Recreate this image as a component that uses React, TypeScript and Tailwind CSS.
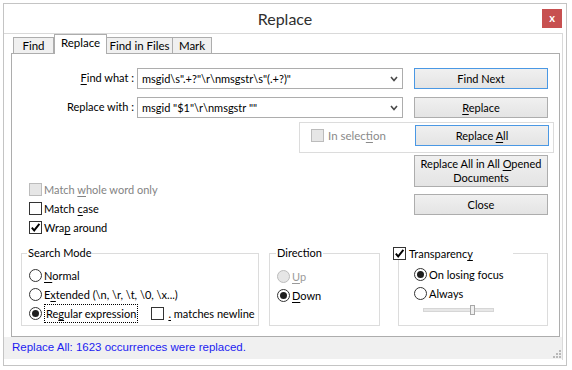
import React from "react";

const U = ({ children }: { children: React.ReactNode }) => (
  <span className="underline decoration-1 underline-offset-2">{children}</span>
);

const Box = ({ checked, disabled }: { checked?: boolean; disabled?: boolean }) => (
  <span
    className={`flex h-[13px] w-[13px] shrink-0 items-center justify-center border ${
      disabled ? "border-[#bcbcbc] bg-[#e6e6e6]" : "border-[#333333] bg-white"
    }`}
  >
    {checked && (
      <svg width="11" height="11" viewBox="0 0 11 11">
        <path d="M1.8 5.6 L4.2 8.4 L9.4 1.8" fill="none" stroke="#000" strokeWidth="1.9" />
      </svg>
    )}
  </span>
);

const Dot = ({ checked, disabled }: { checked?: boolean; disabled?: boolean }) => (
  <span
    className={`flex h-[13px] w-[13px] shrink-0 items-center justify-center rounded-full border ${
      disabled ? "border-[#bcbcbc] bg-[#e6e6e6]" : "border-[#333333] bg-white"
    }`}
  >
    {checked && <span className="h-[7px] w-[7px] rounded-full bg-[#1e1e1e]" />}
  </span>
);

const Check = ({
  checked,
  disabled,
  children,
}: {
  checked?: boolean;
  disabled?: boolean;
  children: React.ReactNode;
}) => (
  <div className="flex h-[13px] items-center gap-[2px] whitespace-nowrap">
    <Box checked={checked} disabled={disabled} />
    <span className={`leading-none ${disabled ? "text-[#838383]" : "text-black"}`}>{children}</span>
  </div>
);

const Radio = ({
  checked,
  disabled,
  children,
}: {
  checked?: boolean;
  disabled?: boolean;
  children: React.ReactNode;
}) => (
  <div className="flex h-[13px] items-center gap-[2px] whitespace-nowrap">
    <Dot checked={checked} disabled={disabled} />
    <span className={`leading-none ${disabled ? "text-[#9a9a9a]" : "text-black"}`}>{children}</span>
  </div>
);

const Btn = ({
  children,
  focused,
  tall,
}: {
  children: React.ReactNode;
  focused?: boolean;
  tall?: boolean;
}) => (
  <div
    className={`flex w-[134px] flex-col items-center justify-center whitespace-nowrap border bg-linear-to-b from-[#f0f0f0] to-[#e4e4e4] leading-[14px] text-black ${
      focused ? "border-[#4a98e4]" : "border-[#adadad]"
    } ${tall ? "h-[32px]" : "h-[21px]"}`}
  >
    {children}
  </div>
);

const Combo = ({ value }: { value: string }) => (
  <div className="flex h-[21px] w-[266px] items-center border border-[#adadad] bg-white pl-[4px] pr-[3px]">
    <span className="flex-1 whitespace-nowrap leading-none">{value}</span>
    <svg width="8" height="6" viewBox="0 0 8 6" className="mr-[1px]">
      <path d="M1 1 L4 4.5 L7 1" fill="none" stroke="#4a4a4a" strokeWidth="1.6" />
    </svg>
  </div>
);

const Tab = ({ label, active, w }: { label: string; active?: boolean; w: string }) => (
  <div
    className={`flex items-center justify-center border-t border-r border-[#adadad] text-[11.5px] ${w} ${
      active
        ? "relative z-10 -mb-px h-[20px] border-l bg-white pb-[3px]"
        : "h-[16px] bg-[#f0f0f0] pt-px"
    }`}
  >
    {label}
  </div>
);

export default function App() {
  return (
    <div className="h-[370px] w-[572px] bg-white pl-[3px] pt-[3px] font-['Lato','Liberation_Sans',sans-serif] text-[11px] text-black">
      <div className="flex h-[363px] w-[564px] flex-col border border-[#c4c4c4] bg-white">
        {/* title bar */}
        <div className="flex h-[29px] shrink-0">
          <div className="w-[24px]" />
          <div className="flex-1 pt-[5px] text-center text-[16px] leading-[20px] text-[#2f2f2f]">Replace</div>
          <div className="mr-[4px] mt-[5px] flex h-[19px] w-[20px] items-center justify-center bg-[#c75050] pb-[2px] text-[11px] font-bold leading-none text-white">
            x
          </div>
        </div>

        {/* client */}
        <div className="mb-[5px] mr-[3px] flex h-[327px] flex-col border-t border-r border-[#d9d9d9]">
          <div className="flex h-[19px] items-end pl-[9px]">
            <Tab label="Find" w="w-[41px] border-l" />
            <Tab label="Replace" active w="w-[53px]" />
            <Tab label="Find in Files" w="w-[66px]" />
            <Tab label="Mark" w="w-[39px]" />
          </div>

          <div className="ml-[7px] flex h-[284px] w-[549px] flex-col border border-[#adadad] bg-white">
            <div className="mt-[14px] flex h-[21px] items-center">
              <div className="w-[122px] text-right">
                <U>F</U>ind what :
              </div>
              <div className="ml-[3px]">
                <Combo value={'msgid\\s".+?"\\r\\nmsgstr\\s"(.+?)"'} />
              </div>
              <div className="ml-[11px]">
                <Btn focused>Find Next</Btn>
              </div>
            </div>

            <div className="mt-[8px] flex h-[21px] items-center">
              <div className="w-[122px] text-right">Replace with :</div>
              <div className="ml-[3px]">
                <Combo value={'msgid "$1"\\r\\nmsgstr ""'} />
              </div>
              <div className="ml-[11px]">
                <Btn>
                  <span>
                    <U>R</U>eplace
                  </span>
                </Btn>
              </div>
            </div>

            <div className="ml-[287px] mt-[4px] flex h-[31px] w-[255px] items-start border border-[#dcdcdc] pl-[11px] pt-[2px]">
              <div className="mt-[4px]">
                <Check disabled>
                  <span className="ml-[2px] text-[11.5px] text-[#8a8a8a]">
                    In selec<U>t</U>ion
                  </span>
                </Check>
              </div>
              <div className="ml-auto mr-[4px]">
                <Btn focused>
                  <span>
                    Replace <U>A</U>ll
                  </span>
                </Btn>
              </div>
            </div>

            <div className="mt-[2px] flex">
              <div className="mt-[28px] flex flex-col gap-[6px] pl-[17px]">
                <Check disabled>
                  Match <U>w</U>hole word only
                </Check>
                <Check>
                  Match <U>c</U>ase
                </Check>
                <Check checked>
                  Wra<U>p</U> around
                </Check>
              </div>
              <div className="ml-auto mr-[11px] flex flex-col gap-[7px]">
                <Btn tall>
                  <span>
                    Replace All in All <U>O</U>pened
                  </span>
                  <span>Documents</span>
                </Btn>
                <Btn>Close</Btn>
              </div>
            </div>

            <div className="ml-[9px] mt-[12px] flex items-stretch">
              <fieldset className="w-[238px] min-w-0 shrink-0 border border-[#dcdcdc] pb-[5px] pl-[7px] pt-[9px]">
                <legend className="-ml-[2px] px-[1px] leading-[14px]">Search Mode</legend>
                <div className="flex flex-col gap-[6px]">
                  <Radio>
                    <U>N</U>ormal
                  </Radio>
                  <Radio>
                    E<U>x</U>tended {"(\\n, \\r, \\t, \\0, \\x...)"}
                  </Radio>
                  <div className="flex items-center">
                    <Radio checked>
                      <span className="border border-dotted border-black px-px py-[2px]">
                        Re<U>g</U>ular expression
                      </span>
                    </Radio>
                    <div className="ml-[13px]">
                      <Check>
                        <span className="ml-[2px]">
                          <U>.</U> matches newline
                        </span>
                      </Check>
                    </div>
                  </div>
                </div>
              </fieldset>

              <fieldset className="ml-[10px] w-[111px] min-w-0 shrink-0 border border-[#dcdcdc] pl-[7px] pt-[10px]">
                <legend className="-ml-[1px] px-[1px] leading-[14px]">Direction</legend>
                <div className="flex flex-col gap-[6px]">
                  <Radio disabled>
                    <U>U</U>p
                  </Radio>
                  <Radio checked>
                    <U>D</U>own
                  </Radio>
                </div>
              </fieldset>

              <fieldset className="ml-[18px] w-[150px] min-w-0 shrink-0 border border-[#dcdcdc] pl-[15px] pt-[8px]">
                <legend className="-ml-[21px] w-[120px] leading-[14px]">
                  <div className="flex h-[14px] items-center gap-[3px] whitespace-nowrap">
                    <Box checked />
                    <span className="leading-none">
                      Transparenc<U>y</U>
                    </span>
                  </div>
                </legend>
                <div className="flex flex-col gap-[6px]">
                  <Radio checked>On losing focus</Radio>
                  <Radio>Always</Radio>
                </div>
                <div className="relative ml-[9px] mt-[5px] flex h-[10px] w-[71px] items-center">
                  <div className="h-[4px] w-full border border-[#d6d6d6] bg-[#e7e7e7]" />
                  <div className="absolute left-[47px] top-0 h-[10px] w-[5px] border border-[#a8a8a8] bg-[#f0f0f0]" />
                </div>
              </fieldset>
            </div>
          </div>

          <div className="flex h-[22px] items-center bg-[#f0f0f0] pl-[8px]">
            <span className="whitespace-nowrap font-['Liberation_Sans',sans-serif] text-[11.5px] text-[#1c1cf0]">
              Replace All: 1623 occurrences were replaced.
            </span>
            <svg width="8" height="8" viewBox="0 0 8 8" className="mb-[1px] ml-auto mr-[1px] self-end">
              <rect x="6" y="0" width="2" height="2" fill="#b8b8b8" />
              <rect x="3" y="3" width="2" height="2" fill="#b8b8b8" />
              <rect x="6" y="3" width="2" height="2" fill="#b8b8b8" />
              <rect x="0" y="6" width="2" height="2" fill="#b8b8b8" />
              <rect x="3" y="6" width="2" height="2" fill="#b8b8b8" />
              <rect x="6" y="6" width="2" height="2" fill="#b8b8b8" />
            </svg>
          </div>
        </div>
      </div>
    </div>
  );
}
